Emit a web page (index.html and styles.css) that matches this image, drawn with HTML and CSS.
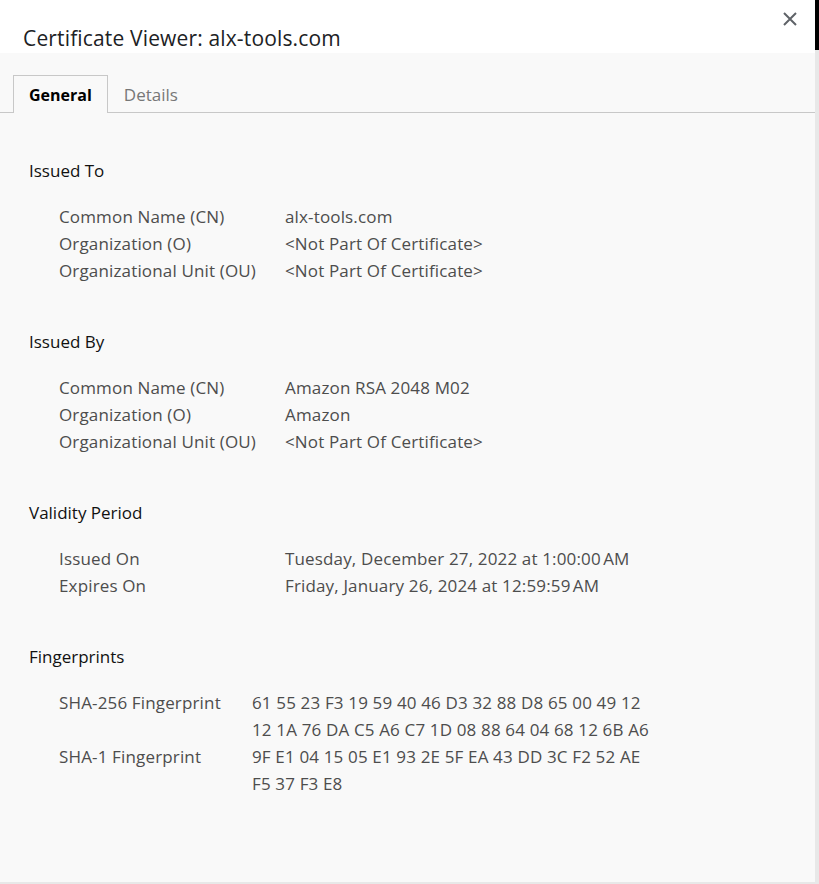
FILE: index.html
```html
<!DOCTYPE html>
<html>
<head>
<meta charset="utf-8">
<link rel="stylesheet" href="styles.css">
</head>
<body>
<div class="backdrop-dark"></div>
<div class="dialog">
  <div class="header">
    <h1 class="title">Certificate Viewer: alx-tools.com</h1>
    <button class="close" aria-label="Close">
      <svg width="14" height="14" viewBox="0 0 14 14"><path d="M1 1L13 13M13 1L1 13" stroke="#5f6368" stroke-width="2" fill="none"/></svg>
    </button>
  </div>
  <div class="tabs">
    <div class="tab active">General</div>
    <div class="tab">Details</div>
  </div>
  <div class="content">
    <section class="section">
      <h2 class="heading">Issued To</h2>
      <div class="rows">
        <div class="label">Common Name (CN)</div><div class="value">alx-tools.com</div>
        <div class="label">Organization (O)</div><div class="value">&lt;Not Part Of Certificate&gt;</div>
        <div class="label">Organizational Unit (OU)</div><div class="value">&lt;Not Part Of Certificate&gt;</div>
      </div>
    </section>
    <section class="section">
      <h2 class="heading">Issued By</h2>
      <div class="rows">
        <div class="label">Common Name (CN)</div><div class="value">Amazon RSA 2048 M02</div>
        <div class="label">Organization (O)</div><div class="value">Amazon</div>
        <div class="label">Organizational Unit (OU)</div><div class="value">&lt;Not Part Of Certificate&gt;</div>
      </div>
    </section>
    <section class="section">
      <h2 class="heading">Validity Period</h2>
      <div class="rows">
        <div class="label">Issued On</div><div class="value">Tuesday, December 27, 2022 at 1:00:00&#8239;AM</div>
        <div class="label">Expires On</div><div class="value">Friday, January 26, 2024 at 12:59:59&#8239;AM</div>
      </div>
    </section>
    <section class="section">
      <h2 class="heading">Fingerprints</h2>
      <div class="rows fp">
        <div class="label">SHA-256 Fingerprint</div><div class="value">61 55 23 F3 19 59 40 46 D3 32 88 D8 65 00 49 12<br>12 1A 76 DA C5 A6 C7 1D 08 88 64 04 68 12 6B A6</div>
        <div class="label">SHA-1 Fingerprint</div><div class="value">9F E1 04 15 05 E1 93 2E 5F EA 43 DD 3C F2 52 AE<br>F5 37 F3 E8</div>
      </div>
    </section>
  </div>
</div>
</body>
</html>
```

FILE: styles.css
```css
html, body {
  margin: 0;
  padding: 0;
}
body {
  width: 819px;
  height: 884px;
  background: #e8e8e8;
  font-family: "Open Sans", "Noto Sans", sans-serif;
  position: relative;
  overflow: hidden;
}
.backdrop-dark {
  position: absolute;
  left: 815px;
  top: 0;
  width: 4px;
  height: 50px;
  background: #000;
}
.dialog {
  width: 815px;
  height: 882px;
  background: #f9f9f9;
  position: relative;
}
.header {
  height: 53px;
  background: #fff;
  display: flex;
  align-items: flex-end;
  padding-left: 23px;
}
.title {
  margin: 0 0 1px 0;
  font-size: 21px;
  font-weight: 400;
  color: #202124;
  line-height: 28px;
  letter-spacing: 0.15px;
}
.close {
  position: absolute;
  right: 18px;
  top: 12px;
  width: 14px;
  height: 14px;
  padding: 0;
  border: 0;
  background: transparent;
  display: flex;
}
.tabs {
  margin-top: 22px;
  padding-left: 13px;
  display: flex;
  border-bottom: 1px solid #c8c8c8;
  height: 37px;
}
.tab {
  height: 37px;
  line-height: 38px;
  padding: 0 15px;
  font-size: 17px;
  color: #777;
  box-sizing: border-box;
  border: 1px solid transparent;
  border-bottom: 0;
}
.tab.active {
  color: #000;
  font-size: 16px;
  font-weight: 700;
  background: #f9f9f9;
  border-color: #c8c8c8;
  height: 38px;
}
.content {
  padding: 44px 0 0 29px;
}
.section {
  margin-bottom: 44px;
}
.heading {
  margin: 0;
  font-size: 17px;
  font-weight: 400;
  line-height: 27px;
  color: #111;
}
.rows {
  margin-top: 19px;
  padding-left: 30px;
  display: grid;
  grid-template-columns: 226px auto;
  font-size: 17px;
  line-height: 27px;
  color: #4d4d4d;
  letter-spacing: 0.15px;
}
.rows.fp {
  grid-template-columns: 193px auto;
}
.label, .value {
  white-space: nowrap;
}
```
